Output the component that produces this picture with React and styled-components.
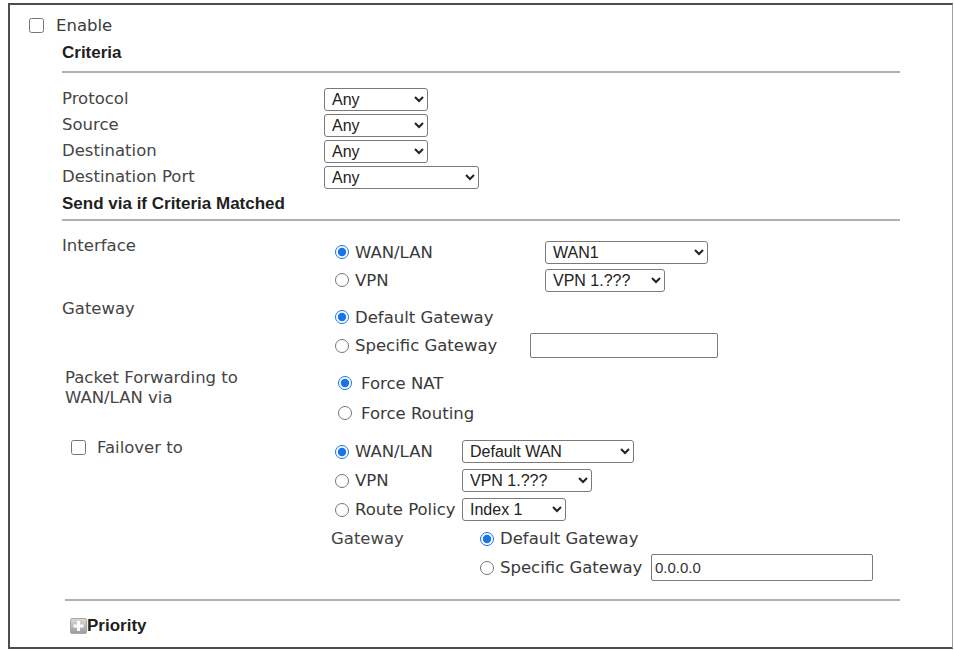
import React from "react";
import styled, { createGlobalStyle } from "styled-components";

const GlobalStyle = createGlobalStyle`
  html, body { margin: 0; padding: 0; background: #fff; }
  body { font-family: "DejaVu Sans", Verdana, sans-serif; color: #454545; }
`;

const Frame = styled.div`
  box-sizing: border-box;
  width: 945px;
  height: 646px;
  margin: 3px 0 0 8px;
  border: 2px solid #4d4d4d;
  border-right: 1px solid #a0a0a0;
  padding: 9px 0 0 19px;
  background: #fff;
`;

const EnableRow = styled.label`
  display: flex;
  align-items: center;
  gap: 12px;
  height: 22px;
  font-size: 16.5px;
  color: #3a3a3a;
`;

const Box = styled.input.attrs({ type: "checkbox" })`
  width: 15px;
  height: 15px;
  margin: 0;
  flex: none;
  accent-color: #1a73e8;
`;

const Section = styled.div`
  margin-left: 33px;
  width: 838px;
`;

const Heading = styled.div`
  font-family: "Liberation Sans", Arial, sans-serif;
  font-weight: bold;
  font-size: 17px;
  color: #1f1f1f;
  height: ${(p) => p.$h}px;
  line-height: ${(p) => p.$h}px;
`;

const Rule = styled.div`
  height: 2px;
  background: #b0b0b0;
  margin-top: ${(p) => p.$top ?? 1}px;
  margin-left: ${(p) => p.$indent || 0}px;
`;

const CriteriaList = styled.div`
  display: grid;
  grid-template-columns: 262px 1fr;
  grid-auto-rows: 26px;
  align-items: center;
  margin-top: 13px;
`;

const FieldRow = styled.div`
  display: grid;
  grid-template-columns: 262px 1fr;
  align-items: start;
  margin-top: ${(p) => p.$gap}px;
`;

const FieldLabel = styled.div`
  font-size: 16.5px;
  line-height: ${(p) => p.$lh || 16}px;
  margin-top: ${(p) => p.$top || 0}px;
  padding-left: ${(p) => p.$indent || 0}px;
  color: #454545;
  white-space: nowrap;
`;

const FailoverLabel = styled.label`
  display: flex;
  align-items: center;
  gap: 11px;
  height: 20px;
  padding-left: 9px;
  font-size: 16.5px;
  color: #454545;
`;

const OptionGrid = styled.div`
  display: grid;
  grid-template-columns: ${(p) => p.$cols};
  grid-auto-rows: ${(p) => p.$row}px;
  align-items: center;
  padding-left: ${(p) => p.$indent}px;
`;

const Option = styled.label`
  display: flex;
  align-items: center;
  gap: ${(p) => p.$gap || 6}px;
  font-size: 16.5px;
  color: #3a3a3a;
  white-space: nowrap;
`;

const Radio = styled.input.attrs({ type: "radio" })`
  width: 14px;
  height: 14px;
  margin: 0;
  flex: none;
  accent-color: #1a73e8;
`;

const SubLabel = styled.span`
  font-size: 16.5px;
  color: #454545;
`;

const Select = styled.select`
  box-sizing: border-box;
  width: ${(p) => p.$w}px;
  height: 23px;
  margin: 0;
  padding: 0 0 0 3px;
  font-family: "Liberation Sans", Arial, sans-serif;
  font-size: 16px;
  color: #222;
  background: #fff;
  border: 1px solid #7a7a7a;
  border-radius: 3px;
`;

const TextBox = styled.input.attrs({ type: "text" })`
  box-sizing: border-box;
  width: ${(p) => p.$w}px;
  height: ${(p) => p.$h}px;
  margin: 0;
  padding: 0 3px;
  font-family: "Liberation Sans", Arial, sans-serif;
  font-size: 15px;
  color: #333;
  border: 1px solid #7a7a7a;
  border-radius: 2px;
`;

const PriorityRow = styled.div`
  display: flex;
  align-items: center;
  height: 22px;
  margin-top: 14px;
  margin-left: 8px;
  font-family: "Liberation Sans", Arial, sans-serif;
  font-weight: bold;
  font-size: 17px;
  color: #1f1f1f;
`;

const Spacer = styled.span``;

function ExpandIcon() {
  return (
    <svg width="17" height="16" viewBox="0 0 17 16" aria-hidden="true">
      <defs>
        <linearGradient id="expandFill" x1="0" y1="0" x2="0" y2="1">
          <stop offset="0" stopColor="#dcdcdc" />
          <stop offset="1" stopColor="#9a9a9a" />
        </linearGradient>
      </defs>
      <rect x="0.5" y="0.5" width="16" height="15" rx="1.5" fill="url(#expandFill)" stroke="#a8a8a8" />
      <rect x="7" y="3" width="3" height="10" fill="#fff" />
      <rect x="3.5" y="6.5" width="10" height="3" fill="#fff" />
    </svg>
  );
}

const criteria = [
  { label: "Protocol", w: 104 },
  { label: "Source", w: 104 },
  { label: "Destination", w: 104 },
  { label: "Destination Port", w: 155 },
];

export default function App() {
  return (
    <>
      <GlobalStyle />
      <Frame>
        <EnableRow>
          <Box />
          Enable
        </EnableRow>
        <Section>
          <Heading $h={34}>Criteria</Heading>
          <Rule />
          <CriteriaList>
            {criteria.map((c) => (
              <React.Fragment key={c.label}>
                <FieldLabel>{c.label}</FieldLabel>
                <div>
                  <Select $w={c.w} defaultValue="any">
                    <option value="any">Any</option>
                  </Select>
                </div>
              </React.Fragment>
            ))}
          </CriteriaList>

          <Heading $h={28}>Send via if Criteria Matched</Heading>
          <Rule />

          <FieldRow $gap={17}>
            <FieldLabel>Interface</FieldLabel>
            <OptionGrid $cols="210px auto" $row={28} $indent={11}>
              <Option>
                <Radio name="iface" defaultChecked />
                WAN/LAN
              </Option>
              <Select $w={163} defaultValue="wan1">
                <option value="wan1">WAN1</option>
              </Select>
              <Option>
                <Radio name="iface" />
                VPN
              </Option>
              <Select $w={120} defaultValue="vpn1">
                <option value="vpn1">VPN 1.???</option>
              </Select>
            </OptionGrid>
          </FieldRow>

          <FieldRow $gap={9}>
            <FieldLabel $top={-2}>Gateway</FieldLabel>
            <OptionGrid $cols="195px auto" $row={28.5} $indent={11}>
              <Option>
                <Radio name="gw" defaultChecked />
                Default Gateway
              </Option>
              <Spacer />
              <Option>
                <Radio name="gw" />
                Specific Gateway
              </Option>
              <TextBox $w={188} $h={25} defaultValue="" />
            </OptionGrid>
          </FieldRow>

          <FieldRow $gap={8}>
            <FieldLabel $lh={20} $indent={3}>
              Packet Forwarding to
              <br />
              WAN/LAN via
            </FieldLabel>
            <OptionGrid $cols="auto" $row={30} $indent={14}>
              <Option $gap={9}>
                <Radio name="fwd" defaultChecked />
                Force NAT
              </Option>
              <Option $gap={9}>
                <Radio name="fwd" />
                Force Routing
              </Option>
            </OptionGrid>
          </FieldRow>

          <FieldRow $gap={9}>
            <FailoverLabel>
              <Box />
              Failover to
            </FailoverLabel>
            <div>
              <OptionGrid $cols="127px auto" $row={29} $indent={11}>
                <Option>
                  <Radio name="fo" defaultChecked />
                  WAN/LAN
                </Option>
                <Select $w={172} defaultValue="dw">
                  <option value="dw">Default WAN</option>
                </Select>
                <Option>
                  <Radio name="fo" />
                  VPN
                </Option>
                <Select $w={130} defaultValue="vpn1">
                  <option value="vpn1">VPN 1.???</option>
                </Select>
                <Option>
                  <Radio name="fo" />
                  Route Policy
                </Option>
                <Select $w={104} defaultValue="i1">
                  <option value="i1">Index 1</option>
                </Select>
              </OptionGrid>
              <OptionGrid $cols="149px 171px auto" $row={29} $indent={7}>
                <SubLabel>Gateway</SubLabel>
                <Option>
                  <Radio name="fogw" defaultChecked />
                  Default Gateway
                </Option>
                <Spacer />
                <Spacer />
                <Option>
                  <Radio name="fogw" />
                  Specific Gateway
                </Option>
                <TextBox $w={222} $h={27} defaultValue="0.0.0.0" />
              </OptionGrid>
            </div>
          </FieldRow>

          <Rule $top={17} $indent={3} />
          <PriorityRow>
            <ExpandIcon />
            Priority
          </PriorityRow>
        </Section>
      </Frame>
    </>
  );
}
